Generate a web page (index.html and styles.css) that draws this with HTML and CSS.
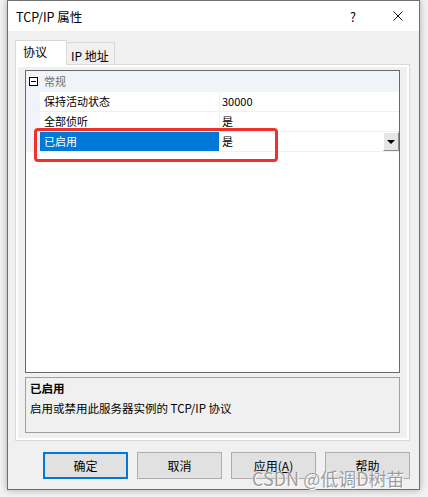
FILE: index.html
```html
<!DOCTYPE html>
<html lang="zh-CN">
<head>
    <meta charset="UTF-8">
    <meta name="viewport" content="width=device-width, initial-scale=1.0">
    <title>TCP/IP 属性</title>
    <link rel="stylesheet" href="styles.css">
</head>
<body>
    <div class="window">
        <div class="titlebar">
            <span class="title">TCP/IP 属性</span>
            <span class="help">?</span>
            <svg class="close" width="10" height="10" viewBox="0 0 10 10">
                <path d="M0.5 0.5 L9.5 9.5 M9.5 0.5 L0.5 9.5" stroke="#1a1a1a" stroke-width="1" fill="none"/>
            </svg>
        </div>
        <div class="content">
            <div class="tabs">
                <div class="tab active">协议</div>
                <div class="tab">IP 地址</div>
            </div>
            <div class="tab-page">
                <div class="propgrid">
                    <div class="grid-view">
                        <div class="row category">
                            <span class="gutter"><span class="toggle"></span></span>
                            <span class="cat-name">常规</span>
                        </div>
                        <div class="row">
                            <span class="gutter"></span>
                            <span class="name">保持活动状态</span>
                            <span class="value">30000</span>
                        </div>
                        <div class="row">
                            <span class="gutter"></span>
                            <span class="name">全部侦听</span>
                            <span class="value">是</span>
                        </div>
                        <div class="row selected">
                            <span class="gutter"></span>
                            <span class="name">已启用</span>
                            <span class="value">是<span class="dropdown"></span></span>
                        </div>
                    </div>
                    <div class="description">
                        <div class="desc-title">已启用</div>
                        <div class="desc-text">启用或禁用此服务器实例的 TCP/IP 协议</div>
                    </div>
                </div>
            </div>
            <div class="buttons">
                <button class="default">确定</button>
                <button>取消</button>
                <button>应用(<u>A</u>)</button>
                <button>帮助</button>
            </div>
        </div>
    </div>

    <div class="annotation"></div>
    <div class="watermark">CSDN @低调D树苗</div>
</body>
</html>
```

FILE: styles.css
```css
* {
    margin: 0;
    padding: 0;
    box-sizing: border-box;
}

body {
    position: relative;
    height: 497px;
    overflow: hidden;
    background: #f2f2f2;
    font-family: "Noto Sans CJK SC", sans-serif;
    font-size: 12px;
    color: #000;
}

.window {
    margin-left: 7px;
    width: 413px;
    height: 490px;
    border: 1px solid #6e6e6e;
    background: #f0f0f0;
    box-shadow: 0 0 7px rgba(0, 0, 0, 0.3);
    display: flex;
    flex-direction: column;
}

.titlebar {
    height: 30px;
    background: #fff;
    display: flex;
    align-items: center;
    padding: 0 16px 0 8px;
    font-size: 12.5px;
}

.help {
    margin-left: auto;
    margin-right: 34px;
    width: 12px;
    text-align: center;
}

.close {
    display: block;
}

.content {
    flex: 1;
    padding: 9px 9px 0 7px;
}

.tabs {
    display: flex;
    align-items: flex-end;
    height: 24px;
}

.tab {
    height: 22px;
    width: 49px;
    margin-left: -1px;
    padding: 4px 0 0 4px;
    line-height: 18px;
    background: #f0f0f0;
    border: 1px solid #d9d9d9;
    border-bottom: none;
}

.tab.active {
    position: relative;
    z-index: 1;
    height: 25px;
    width: 52px;
    margin-left: 0;
    margin-bottom: -1px;
    padding: 2px 0 0 7px;
    background: #fff;
}

.tab-page {
    width: 395px;
    height: 377px;
    border: 1px solid #d9d9d9;
    background: #fff;
    padding: 2px;
}

.propgrid {
    height: 100%;
    background: #f0f0f0;
    padding: 3px 7px 5px 7px;
    display: flex;
    flex-direction: column;
    gap: 4px;
}

.grid-view {
    height: 303px;
    border: 1px solid #696969;
    background: #fff;
    font-size: 11px;
}

.row {
    display: flex;
    height: 20px;
    border-bottom: 1px solid #f0f0f0;
    line-height: 19px;
}

.row.category {
    height: 21px;
    background: #f0f4f9;
    border-bottom: none;
    align-items: center;
}

.gutter {
    width: 14px;
    height: 100%;
    background: #f0f4f9;
    display: flex;
    align-items: center;
}

.toggle {
    position: relative;
    width: 9px;
    height: 9px;
    margin: 0 0 1px 3px;
    border: 1px solid #000;
    background: #fff;
}

.toggle::after {
    content: "";
    position: absolute;
    left: 1px;
    top: 3px;
    width: 5px;
    height: 1px;
    background: #000;
}

.cat-name {
    padding-left: 4px;
    color: #6d6d6d;
}

.name {
    width: 180px;
    padding-left: 4px;
    border-right: 1px solid #f0f0f0;
}

.value {
    flex: 1;
    padding-left: 2px;
    display: flex;
    justify-content: space-between;
}

.selected .name {
    background: #0078d7;
    color: #fff;
}

.dropdown {
    position: relative;
    width: 16px;
    height: 19px;
    background: #e6e6e6;
    border: 1px solid;
    border-color: #fff #8a8a8a #8a8a8a #fff;
}

.dropdown::after {
    content: "";
    position: absolute;
    left: 3px;
    top: 7px;
    border-left: 4px solid transparent;
    border-right: 4px solid transparent;
    border-top: 4px solid #000;
}

.description {
    height: 56px;
    border: 1px solid #a0a0a0;
    background: #f0f0f0;
    padding: 0 4px;
    font-size: 11.5px;
    line-height: 20px;
}

.desc-title {
    font-weight: bold;
}

.buttons {
    display: flex;
    gap: 9px;
    margin-top: 11px;
    padding-left: 28px;
}

button {
    width: 86px;
    height: 27px;
    background: #e1e1e1;
    border: 1px solid #adadad;
    font-family: inherit;
    font-size: 12px;
    color: #000;
}

button.default {
    border: 2px solid #0078d7;
}

.annotation {
    position: absolute;
    left: 34px;
    top: 128px;
    width: 244px;
    height: 34px;
    border: 3px solid #f0302a;
    border-radius: 4px;
}

.watermark {
    position: absolute;
    left: 252px;
    top: 466px;
    font-size: 18px;
    line-height: 24px;
    color: #9c9c9c;
    text-shadow: 0 0 1px #fff, 1px 1px 0 #fff;
    white-space: nowrap;
}
```
